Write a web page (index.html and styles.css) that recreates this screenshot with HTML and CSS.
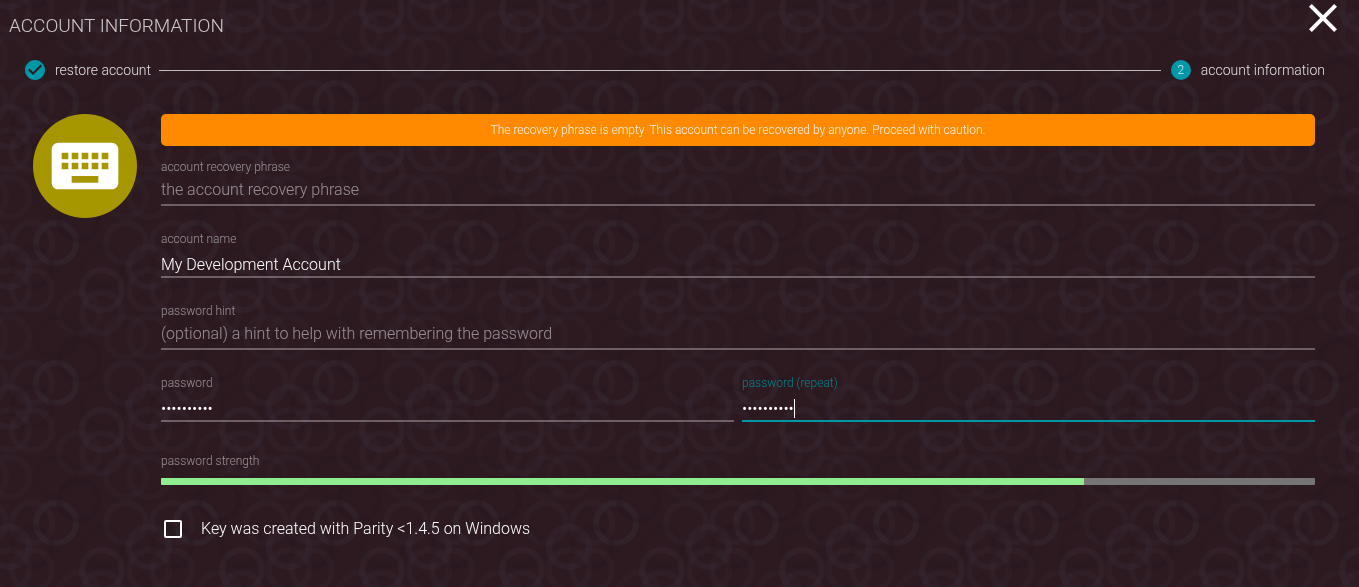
FILE: index.html
```html
<!DOCTYPE html>
<html lang="en">
<head>
<meta charset="utf-8">
<meta name="viewport" content="width=device-width, initial-scale=1">
<title>Account information</title>
<link rel="stylesheet" href="styles.css">
</head>
<body>
<svg class="backdrop" aria-hidden="true">
  <defs>
    <pattern id="rings" width="140" height="140" patternUnits="userSpaceOnUse" patternTransform="translate(9 10)">
      <g id="tile" fill="none" stroke="#4a4a58" stroke-width="6" opacity=".5">
        <g id="ringset">
          <circle cx="47" cy="93" r="20" stroke-opacity=".28"/>
          <circle cx="0" cy="117" r="20" stroke-opacity=".24"/>
          <circle cx="93" cy="0" r="20" stroke-opacity=".26"/>
          <circle cx="93" cy="23" r="20" stroke-opacity=".18"/>
          <circle cx="0" cy="0" r="20" stroke-opacity=".15"/>
          <circle cx="23" cy="0" r="20" stroke-opacity=".15"/>
          <circle cx="117" cy="93" r="20" stroke-opacity=".15"/>
          <circle cx="23" cy="93" r="20" stroke-opacity=".15"/>
          <circle cx="0" cy="47" r="20" stroke-opacity=".16"/>
          <circle cx="117" cy="47" r="20" stroke-opacity=".12"/>
          <circle cx="70" cy="23" r="20" stroke-opacity=".12"/>
          <circle cx="70" cy="70" r="20" stroke="#110b10" stroke-opacity=".18"/>
          <circle cx="23" cy="117" r="20" stroke="#110b10" stroke-opacity=".18"/>
          <circle cx="93" cy="117" r="20" stroke="#110b10" stroke-opacity=".14"/>
          <circle cx="47" cy="47" r="20" stroke="#110b10" stroke-opacity=".14"/>
        </g>
        <use href="#ringset" x="140"/>
        <use href="#ringset" y="140"/>
        <use href="#ringset" x="-140"/>
        <use href="#ringset" y="-140"/>
        <use href="#ringset" x="140" y="140"/>
      </g>
    </pattern>
  </defs>
  <rect width="100%" height="100%" fill="url(#rings)"/>
</svg>

<main class="dialog">
  <header class="header">
    <h1 class="title">ACCOUNT INFORMATION</h1>
    <button class="close" type="button" aria-label="Close">
      <svg class="close-icon" viewBox="5 5 14 14" aria-hidden="true"><path d="M19 6.41L17.59 5 12 10.59 6.41 5 5 6.41 10.59 12 5 17.59 6.41 19 12 13.41 17.59 19 19 17.59 13.41 12z"/></svg>
    </button>
  </header>

  <ol class="steps">
    <li class="step">
      <svg class="step-icon" viewBox="2 2 20 20" aria-hidden="true"><path d="M12 2C6.48 2 2 6.48 2 12s4.48 10 10 10 10-4.48 10-10S17.52 2 12 2zm-2 15l-5-5 1.41-1.41L10 14.17l7.59-7.59L19 8l-9 9z"/></svg>
      <span>restore account</span>
    </li>
    <li class="step-line" role="presentation"></li>
    <li class="step" aria-current="step">
      <span class="step-number">2</span>
      <span>account information</span>
    </li>
  </ol>

  <div class="content">
    <div class="avatar">
      <svg class="avatar-icon" viewBox="0 0 24 24" aria-hidden="true"><path d="M20 5H4c-1.1 0-1.990.9-1.990 2L2 17c0 1.100.9 2 2 2h16c1.100 0 2-.9 2-2V7c0-1.100-.9-2-2-2zm-9 3h2v2h-2V8zm0 3h2v2h-2v-2zM8 8h2v2H8V8zm0 3h2v2H8v-2zm-1 2H5v-2h2v2zm0-3H5V8h2v2zm9 7H8v-2h8v2zm0-4h-2v-2h2v2zm0-3h-2V8h2v2zm3 3h-2v-2h2v2zm0-3h-2V8h2v2z"/></svg>
    </div>
    <form class="form">
      <p class="warning" role="alert">The recovery phrase is empty. This account can be recovered by anyone. Proceed with caution.</p>
      <div class="field">
        <label class="label" for="phrase">account recovery phrase</label>
        <input class="input" id="phrase" type="text" placeholder="the account recovery phrase">
      </div>
      <div class="field">
        <label class="label" for="name">account name</label>
        <input class="input" id="name" type="text" value="My Development Account" placeholder="a name for the account">
      </div>
      <div class="field">
        <label class="label" for="hint">password hint</label>
        <input class="input" id="hint" type="text" placeholder="(optional) a hint to help with remembering the password">
      </div>
      <div class="passwords">
        <div class="field">
          <label class="label" for="password">password</label>
          <input class="input" id="password" type="password" value="parity1234">
        </div>
        <div class="field field-active">
          <label class="label" for="repeat">password (repeat)</label>
          <input class="input" id="repeat" type="password" value="parity1234">
          <span class="caret"></span>
        </div>
      </div>
      <div class="strength">
        <span class="label" id="strength-label">password strength</span>
        <div class="meter" role="progressbar" aria-labelledby="strength-label" aria-valuenow="80" aria-valuemin="0" aria-valuemax="100"><div class="meter-fill" style="width: 80%"></div></div>
      </div>
      <label class="check"><input class="box" type="checkbox"><span>Key was created with Parity &lt;1.4.5 on Windows</span></label>
    </form>
  </div>
</main>
</body>
</html>
```
FILE: styles.css
```css
* {
  box-sizing: border-box;
}

body {
  margin: 0;
  min-height: 100vh;
  background: #2d1a21;
  color: #fff;
  font-family: Roboto, "Liberation Sans", sans-serif;
  font-weight: 300;
}

.backdrop {
  position: fixed;
  inset: 0;
  z-index: -1;
  width: 100%;
  height: 100%;
}

.header {
  display: flex;
  justify-content: space-between;
  align-items: flex-start;
  padding: 4px 22px 0 9px;
}

.title {
  margin: 10px 0 0;
  color: rgba(255, 255, 255, 0.75);
  font-size: 19px;
  font-weight: 300;
  line-height: 24px;
}

.close {
  display: flex;
  padding: 0;
  border: 0;
  background: none;
  cursor: pointer;
}

.close-icon {
  width: 28px;
  height: 28px;
  fill: #fff;
}

.steps {
  display: flex;
  align-items: center;
  margin: 20px 34px 0 25px;
  padding: 0;
  list-style: none;
  color: rgba(255, 255, 255, 0.85);
  font-size: 14px;
  line-height: 24px;
}

.step {
  display: flex;
  align-items: center;
  gap: 10px;
}

.step-line {
  flex: 1;
  height: 1px;
  margin: 0 10px 0 8px;
  background: #bdbdbd;
}

.step-icon {
  width: 20px;
  height: 20px;
  fill: #0097a7;
}

.step-number {
  width: 20px;
  border-radius: 50%;
  background: #0097a7;
  font-size: 12px;
  line-height: 20px;
  text-align: center;
}

.content {
  display: flex;
  align-items: flex-start;
  gap: 24px;
  padding: 32px 44px 32px 33px;
}

.avatar {
  display: flex;
  flex: none;
  padding: 12px;
  border-radius: 50%;
  background: #a69700;
}

.avatar-icon {
  width: 80px;
  height: 80px;
  fill: #fff;
}

.form {
  flex: 1;
}

.warning {
  margin: 0 0 13px;
  padding: 8px;
  border-radius: 5px;
  background: #ff8a00;
  color: rgba(255, 255, 255, 0.9);
  font-size: 12px;
  line-height: 16px;
  text-align: center;
}

.field {
  position: relative;
  flex: 1;
  margin-bottom: 25px;
}

.label {
  display: block;
  color: rgba(255, 255, 255, 0.5);
  font-size: 12px;
  line-height: 16px;
}

.input {
  display: block;
  width: 100%;
  height: 31px;
  padding: 5px 0 0;
  border: 0;
  border-bottom: 2px solid rgba(255, 255, 255, 0.3);
  border-radius: 0;
  outline: 0;
  background: none;
  color: #fff;
  font: inherit;
  font-size: 16px;
}

.input:placeholder-shown {
  padding: 0;
}

.input::placeholder {
  color: rgba(255, 255, 255, 0.5);
  opacity: 1;
}

.passwords {
  display: flex;
  gap: 8px;
}

.field-active .label {
  color: #00838f;
}

.field-active .input {
  border-color: #0097a7;
}

.caret {
  position: absolute;
  left: 52px;
  bottom: 4px;
  width: 1px;
  height: 19px;
  background: #fff;
}

.strength {
  margin-top: 6px;
}

.meter {
  height: 7px;
  margin-top: 9px;
  overflow: hidden;
  border-radius: 1px;
  background: #757575;
}

.meter-fill {
  height: 100%;
  background: #90ee90;
}

.check {
  display: flex;
  align-items: center;
  gap: 19px;
  margin-top: 32px;
  padding-left: 3px;
  font-size: 16px;
  line-height: 24px;
}

.box {
  appearance: none;
  width: 18px;
  height: 18px;
  margin: 0;
  border: 2px solid #fff;
  border-radius: 2px;
}

.box:checked {
  background: #0097a7;
}
```
